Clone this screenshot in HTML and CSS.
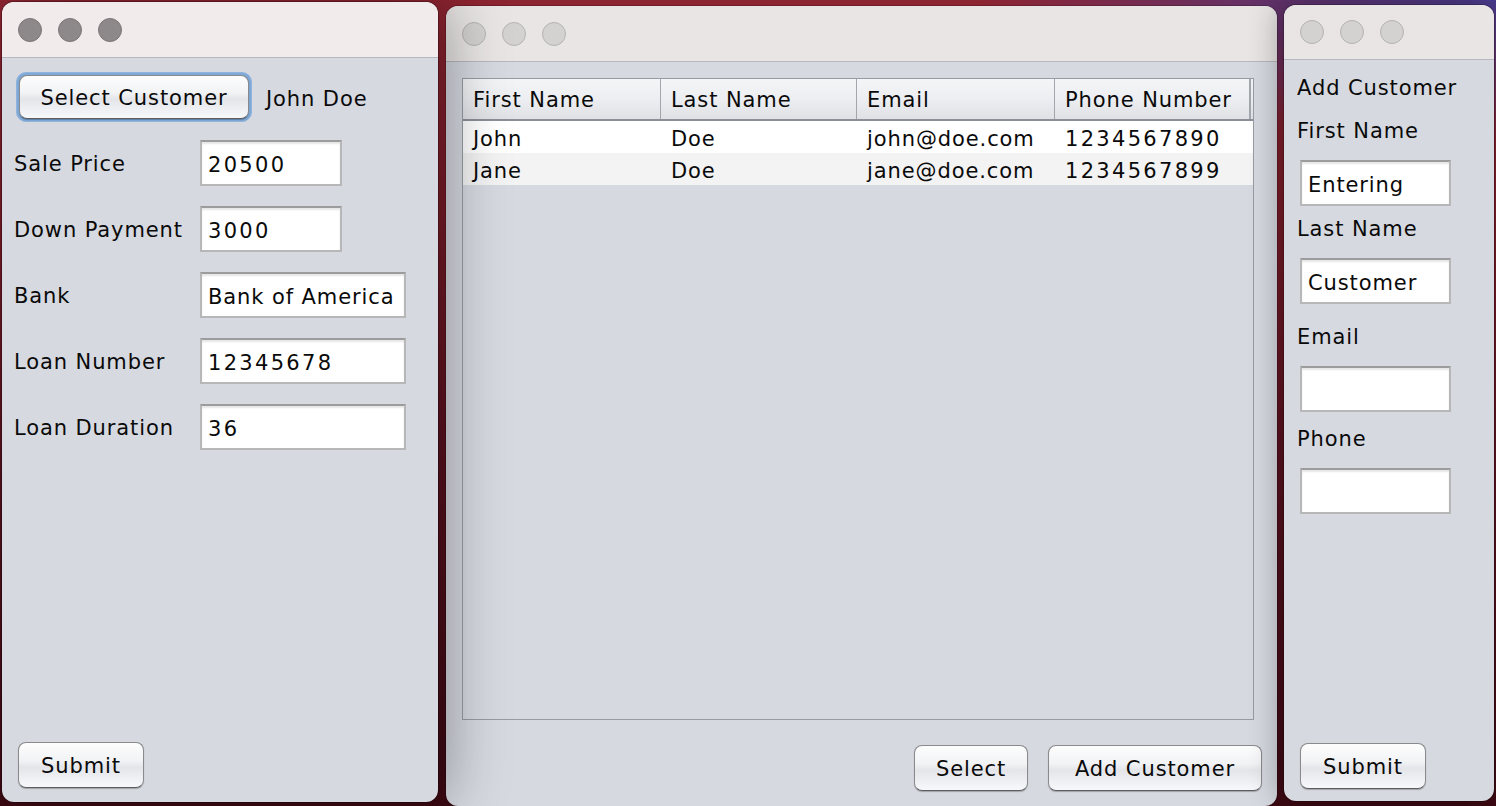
FILE: index.html
```html
<!DOCTYPE html>
<html>
<head>
<meta charset="utf-8">
<link rel="stylesheet" href="styles.css">
</head>
<body>
<div class="desktop">
  <div class="win win-mid">
    <div class="titlebar"><span class="light"></span><span class="light"></span><span class="light"></span></div>
    <div class="body mid-body">
      <div class="table">
        <div class="thead">
          <div class="th">First Name</div>
          <div class="th">Last Name</div>
          <div class="th">Email</div>
          <div class="th th-last">Phone Number</div>
        </div>
        <div class="tr">
          <div class="td">John</div><div class="td">Doe</div><div class="td">john@doe.com</div><div class="td num">1234567890</div>
        </div>
        <div class="tr tr-alt">
          <div class="td">Jane</div><div class="td">Doe</div><div class="td">jane@doe.com</div><div class="td num">1234567899</div>
        </div>
      </div>
      <div class="actions">
        <button class="btn btn-select">Select</button>
        <button class="btn btn-add">Add Customer</button>
      </div>
    </div>
  </div>

  <div class="win win-left">
    <div class="titlebar titlebar-active"><span class="light"></span><span class="light"></span><span class="light"></span></div>
    <div class="body left-body">
      <div class="cust-row">
        <div class="focus-ring"><button class="btn btn-cust">Select Customer</button></div>
        <span class="cust-name">John Doe</span>
      </div>
      <div class="form">
        <label class="lbl">Sale Price</label><div class="field field-s num">20500</div>
        <label class="lbl">Down Payment</label><div class="field field-s num">3000</div>
        <label class="lbl">Bank</label><div class="field field-l">Bank of America</div>
        <label class="lbl">Loan Number</label><div class="field field-l num">12345678</div>
        <label class="lbl">Loan Duration</label><div class="field field-l num">36</div>
      </div>
      <button class="btn btn-submit btn-submit-left">Submit</button>
    </div>
  </div>

  <div class="win win-right">
    <div class="titlebar"><span class="light"></span><span class="light"></span><span class="light"></span></div>
    <div class="body right-body">
      <div class="rlbl r-head">Add Customer</div>
      <div class="rlbl r-first">First Name</div>
      <div class="field field-r">Entering</div>
      <div class="rlbl r-last">Last Name</div>
      <div class="field field-r">Customer</div>
      <div class="rlbl r-email">Email</div>
      <div class="field field-r"></div>
      <div class="rlbl r-phone">Phone</div>
      <div class="field field-r"></div>
      <button class="btn btn-submit btn-submit-right">Submit</button>
    </div>
  </div>
</div>
</body>
</html>
```

FILE: styles.css
```css
* { box-sizing: border-box; }
html, body { margin: 0; padding: 0; }
body {
  width: 1496px;
  height: 806px;
  overflow: hidden;
  font-family: "DejaVu Sans", "Liberation Sans", sans-serif;
  font-size: 21px;
  letter-spacing: 0.9px;
  color: #0a0a0a;
}
.desktop {
  position: relative;
  width: 1496px;
  height: 806px;
  background:
    radial-gradient(ellipse 520px 140px at 100% 0%, rgba(72,58,140,1) 0%, rgba(72,58,140,0.6) 45%, rgba(72,58,140,0) 100%),
    linear-gradient(180deg, #8d2431 0%, #7a1c28 25%, #5a1220 55%, #3c0913 100%);
}
.win {
  position: absolute;
  display: flex;
  flex-direction: column;
  background: #d6d9e0;
  border-radius: 12px;
  overflow: hidden;
}
.win-left {
  left: 2px; top: 2px; width: 436px; height: 800px;
  z-index: 3;
  box-shadow: 0 0 0 1px rgba(0,0,0,0.25), 10px 0 60px rgba(0,0,0,0.35);
}
.win-mid {
  left: 446px; top: 6px; width: 831px; height: 800px;
  z-index: 1;
  box-shadow: 0 0 0 1px rgba(0,0,0,0.2);
}
.win-right {
  left: 1284px; top: 5px; width: 210px; height: 796px;
  z-index: 2;
  box-shadow: 0 0 0 1px rgba(0,0,0,0.2), -6px 0 30px rgba(0,0,0,0.3);
}
.titlebar {
  flex: none;
  height: 56px;
  background: #e9e5e5;
  border-bottom: 1px solid #b6b8bd;
  display: flex;
  align-items: center;
  gap: 16px;
  padding-left: 16px;
}
.win-right .titlebar { height: 55px; }
.titlebar-active { background: #f1ebec; }
.light {
  width: 24px; height: 24px;
  border-radius: 50%;
  background: #d4d1d1;
  border: 1px solid #b5b2b2;
}
.titlebar-active .light {
  background: #8d898a;
  border-color: #7b7778;
}
.body { flex: 1; display: flex; flex-direction: column; }
.num { letter-spacing: 2.3px; }

/* buttons */
.btn {
  font-family: inherit;
  font-size: 21px;
  letter-spacing: 0.9px;
  color: #0a0a0a;
  border: 1.5px solid #8a8a8c;
  border-bottom-color: #5d5d60;
  border-radius: 8px;
  background: linear-gradient(180deg, #fdfdfd 0%, #f2f3f5 40%, #e4e5e9 55%, #eef0f3 80%, #f7f8fb 100%);
  box-shadow: 0 1px 1px rgba(0,0,0,0.25);
  padding: 2px 0 0 0;
  margin: 0;
}

/* left window */
.left-body { padding: 14px 12px 14px 12px; }
.cust-row { display: flex; align-items: center; }
.focus-ring {
  margin-left: 2px;
  padding: 2px;
  border: 1px solid #8fb3db;
  border-radius: 10px;
  background: #7ea9d9;
}
.btn-cust { display: block; width: 230px; height: 44px; }
.cust-name { margin-left: 14px; padding-top: 3px; }
.form {
  margin-top: 18px;
  display: grid;
  grid-template-columns: 186px auto;
  row-gap: 20px;
  align-items: center;
  justify-items: start;
}
.lbl { padding-top: 2px; }
.field {
  height: 46px;
  background: #fff;
  border: 2px solid #b7b7b7;
  border-top-color: #9c9c9c;
  box-shadow: inset 0 2px 2px rgba(0,0,0,0.10);
  padding: 3px 0 0 6px;
  display: flex;
  align-items: center;
}
.field-s { width: 142px; }
.field-l { width: 206px; }
.btn-submit { width: 126px; height: 46px; }
.btn-submit-left { margin-top: auto; margin-left: 4px; }

/* middle window */
.mid-body { padding: 16px 15px 15px 16px; }
.table {
  flex: 1;
  margin-right: 8px;
  border: 1.5px solid #979ba3;
  display: flex;
  flex-direction: column;
}
.thead, .tr {
  display: grid;
  grid-template-columns: 198px 196px 198px 196px;
}
.thead {
  height: 42px;
  background: linear-gradient(180deg, #f4f5f7 0%, #eceef1 50%, #dfe1e5 100%);
  border-bottom: 2px solid #8b8f97;
}
.th {
  padding: 2px 0 0 10px;
  display: flex;
  align-items: center;
  border-right: 1.5px solid #a3a6ac;
}
.th-last { border-right: 2px solid #a3a6ac; }
.tr { height: 32px; background: #fff; }
.tr-alt { background: #f3f3f3; }
.td {
  padding: 4px 0 0 10px;
  display: flex;
  align-items: center;
}
.actions {
  margin-top: 25px;
  display: flex;
  justify-content: flex-end;
  gap: 20px;
}
.btn-select { width: 114px; height: 46px; }
.btn-add { width: 214px; height: 46px; }

/* right window */
.right-body { padding: 0 12px 12px 13px; align-items: flex-start; }
.rlbl { height: 26px; line-height: 28px; }
.r-head { margin-top: 14px; }
.r-first { margin-top: 17px; }
.r-last { margin-top: 9px; }
.r-email { margin-top: 19px; }
.r-phone { margin-top: 13px; }
.field-r { width: 151px; margin-left: 3px; margin-top: 17px; }
.btn-submit-right { margin-top: auto; margin-left: 3px; }
```
